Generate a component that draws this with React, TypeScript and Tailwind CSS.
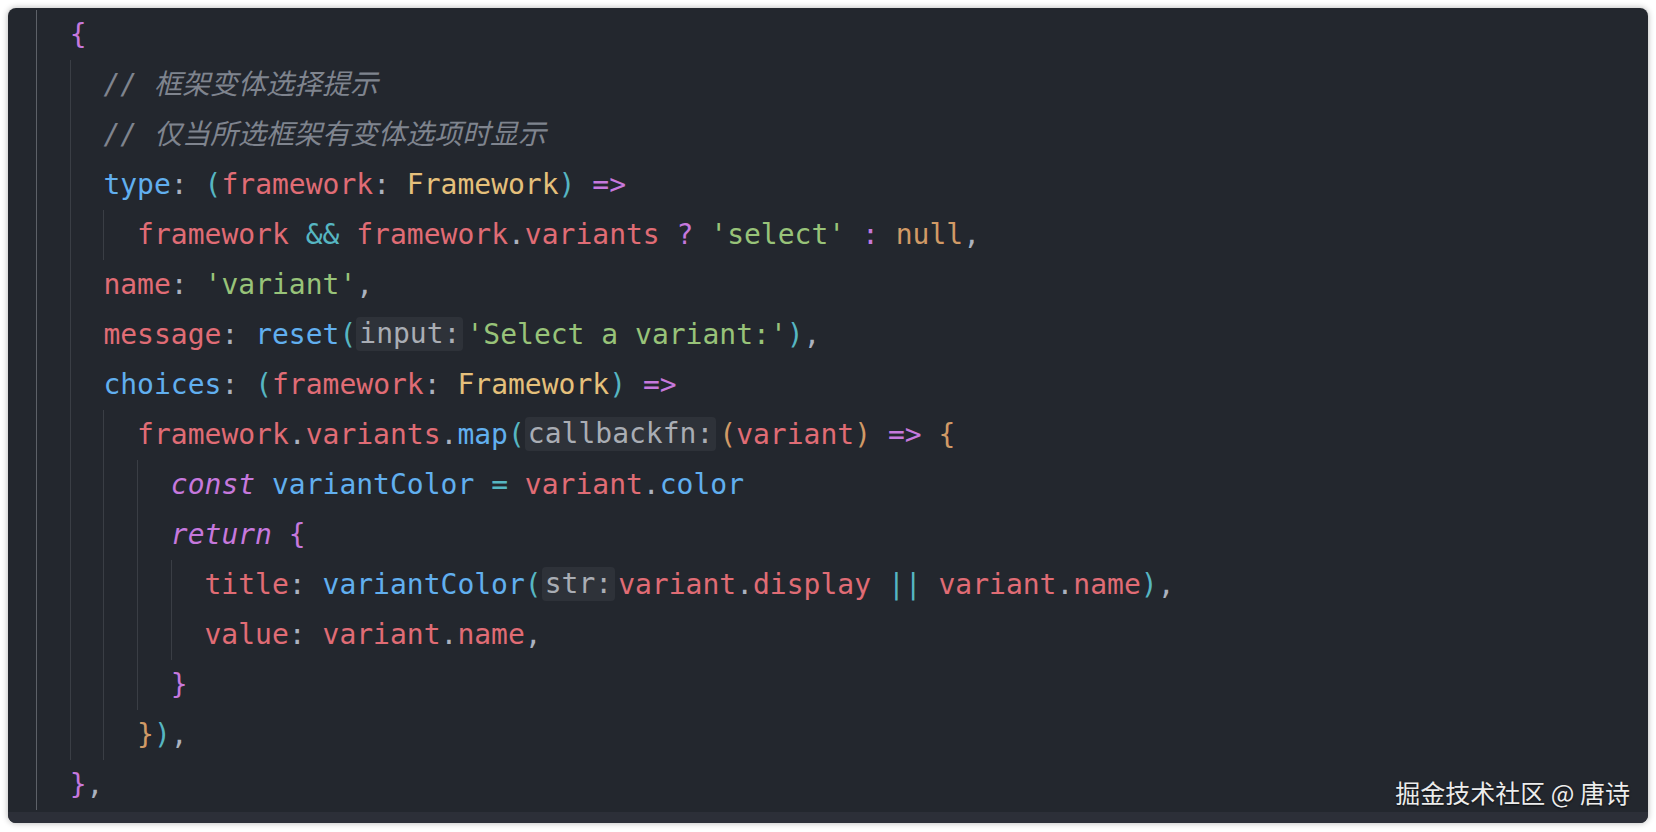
import React from "react";

type Tok = { t: string; k: string; hint?: boolean };

const K: Record<string, string> = {
  P: "text-[#c678dd]",
  PI: "text-[#c678dd] italic",
  R: "text-[#e06c75]",
  B: "text-[#61afef]",
  Y: "text-[#e5c07b]",
  G: "text-[#98c379]",
  C: "text-[#56b6c2]",
  O: "text-[#d19a66]",
  W: "text-[#abb2bf]",
  M: "text-[#7f848e] italic",
  H: "text-[#a9adb4]",
};

const tk = (k: string, t: string): Tok => ({ k, t });
const hint = (t: string): Tok => ({ k: "H", t, hint: true });

const lines: { n: number; toks: Tok[] }[] = [
  { n: 1, toks: [tk("P", "{")] },
  { n: 2, toks: [tk("M", "// 框架变体选择提示")] },
  { n: 2, toks: [tk("M", "// 仅当所选框架有变体选项时显示")] },
  {
    n: 2,
    toks: [
      tk("B", "type"),
      tk("W", ": "),
      tk("C", "("),
      tk("R", "framework"),
      tk("W", ": "),
      tk("Y", "Framework"),
      tk("C", ")"),
      tk("W", " "),
      tk("P", "=>"),
    ],
  },
  {
    n: 3,
    toks: [
      tk("R", "framework"),
      tk("W", " "),
      tk("C", "&&"),
      tk("W", " "),
      tk("R", "framework"),
      tk("W", "."),
      tk("R", "variants"),
      tk("W", " "),
      tk("P", "?"),
      tk("W", " "),
      tk("G", "'select'"),
      tk("W", " "),
      tk("P", ":"),
      tk("W", " "),
      tk("O", "null"),
      tk("W", ","),
    ],
  },
  { n: 2, toks: [tk("R", "name"), tk("W", ": "), tk("G", "'variant'"), tk("W", ",")] },
  {
    n: 2,
    toks: [
      tk("R", "message"),
      tk("W", ": "),
      tk("B", "reset"),
      tk("C", "("),
      hint("input:"),
      tk("G", "'Select a variant:'"),
      tk("C", ")"),
      tk("W", ","),
    ],
  },
  {
    n: 2,
    toks: [
      tk("B", "choices"),
      tk("W", ": "),
      tk("C", "("),
      tk("R", "framework"),
      tk("W", ": "),
      tk("Y", "Framework"),
      tk("C", ")"),
      tk("W", " "),
      tk("P", "=>"),
    ],
  },
  {
    n: 3,
    toks: [
      tk("R", "framework"),
      tk("W", "."),
      tk("R", "variants"),
      tk("W", "."),
      tk("B", "map"),
      tk("C", "("),
      hint("callbackfn:"),
      tk("O", "("),
      tk("R", "variant"),
      tk("O", ")"),
      tk("W", " "),
      tk("P", "=>"),
      tk("W", " "),
      tk("O", "{"),
    ],
  },
  {
    n: 4,
    toks: [
      tk("PI", "const"),
      tk("W", " "),
      tk("B", "variantColor"),
      tk("W", " "),
      tk("C", "="),
      tk("W", " "),
      tk("R", "variant"),
      tk("W", "."),
      tk("B", "color"),
    ],
  },
  { n: 4, toks: [tk("PI", "return"), tk("W", " "), tk("P", "{")] },
  {
    n: 5,
    toks: [
      tk("R", "title"),
      tk("W", ": "),
      tk("B", "variantColor"),
      tk("C", "("),
      hint("str:"),
      tk("R", "variant"),
      tk("W", "."),
      tk("R", "display"),
      tk("W", " "),
      tk("C", "||"),
      tk("W", " "),
      tk("R", "variant"),
      tk("W", "."),
      tk("R", "name"),
      tk("C", ")"),
      tk("W", ","),
    ],
  },
  {
    n: 5,
    toks: [
      tk("R", "value"),
      tk("W", ": "),
      tk("R", "variant"),
      tk("W", "."),
      tk("R", "name"),
      tk("W", ","),
    ],
  },
  { n: 4, toks: [tk("P", "}")] },
  { n: 3, toks: [tk("O", "}"), tk("C", ")"), tk("W", ",")] },
  { n: 1, toks: [tk("P", "}"), tk("W", ",")] },
];

function Line({ n, toks }: { n: number; toks: Tok[] }) {
  const cells = Array.from({ length: n });
  return (
    <div className="flex h-[50px] whitespace-pre">
      {cells.map((_, i) => (
        <span
          key={i}
          className={
            i === 0
              ? "w-[2ch] shrink-0 border-l border-[#5d6168]"
              : "w-[2ch] shrink-0 border-l border-[#3a3e45]"
          }
        />
      ))}
      <span className="leading-[50px]">
        {toks.map((tok, i) =>
          tok.hint ? (
            <span
              key={i}
              className="inline-block align-middle h-[34px] leading-[34px] rounded-[4px] bg-[#2e3239] text-[#a9adb4] pl-[3px] pr-[3px] mr-[3px] -mt-[4px]"
            >
              {tok.t}
            </span>
          ) : (
            <span key={i} className={K[tok.k]}>
              {tok.t}
            </span>
          )
        )}
      </span>
    </div>
  );
}

export default function App() {
  return (
    <div className="w-[1656px] h-[832px] bg-white overflow-hidden">
      <div className="relative ml-[8px] mt-[8px] w-[1640px] h-[815px] rounded-[8px] bg-[#23272e] shadow-[0_0_6px_rgba(0,0,0,0.3)] overflow-hidden flex flex-col">
        <div
          className="flex-1 pl-[28px] pt-[2px] text-[28px] antialiased"
          style={{ fontFamily: '"DejaVu Sans Mono", "Noto Sans CJK SC", monospace' }}
        >
          {lines.map((l, i) => (
            <Line key={i} n={l.n} toks={l.toks} />
          ))}
        </div>
        <div className="h-[11px] bg-[#2c2f38] shrink-0" />
        <div
          className="absolute right-[18px] bottom-[18px] text-[25px] leading-none text-[#ececec] [text-shadow:0_1px_2px_rgba(0,0,0,0.7)]"
          style={{ fontFamily: '"Noto Sans CJK SC", "Noto Sans", sans-serif' }}
        >
          掘金技术社区 @ 唐诗
        </div>
      </div>
    </div>
  );
}
